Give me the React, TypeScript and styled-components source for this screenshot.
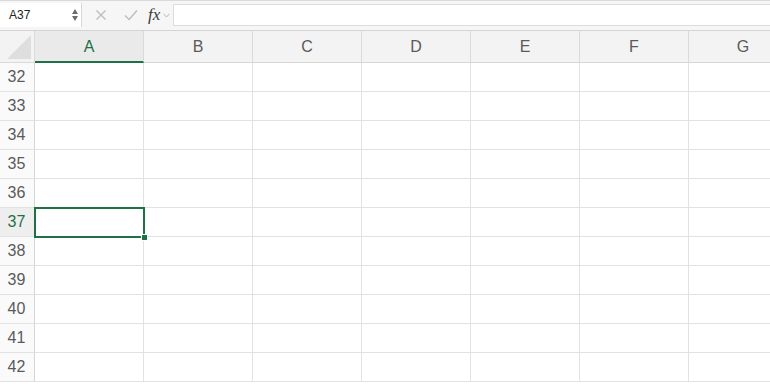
import React, { FC } from 'react';
import styled, { createGlobalStyle } from 'styled-components';

const GREEN = '#1e7145';
const COLUMNS = ['A', 'B', 'C', 'D', 'E', 'F', 'G'];
const ROWS = [32, 33, 34, 35, 36, 37, 38, 39, 40, 41, 42];
const ACTIVE_COL = 'A';
const ACTIVE_ROW = 37;

const GlobalStyle = createGlobalStyle`
  html, body {
    margin: 0;
    padding: 0;
    background: #ffffff;
    overflow: hidden;
  }

  body {
    font-family: 'Liberation Sans', Arial, sans-serif;
  }
`;

const Sheet = styled.div`
  width: 770px;
  height: 387px;
  overflow: hidden;
  display: flex;
  flex-direction: column;
`;

const FormulaBar = styled.div`
  height: 28px;
  display: flex;
  align-items: center;
  background: #f6f6f6;
  border-top: 1px solid #dadada;
  border-bottom: 1px solid #d4d4d4;
  padding-bottom: 1px;
  box-shadow: 0 1px 0 #e4e4e4;
`;

const NameBox = styled.div`
  width: 82px;
  height: 24px;
  box-sizing: border-box;
  background: #ffffff;
  border-right: 1px solid #d6d6d6;
  display: flex;
  align-items: center;
  justify-content: space-between;
  padding: 0 3px 0 9px;
  font-size: 12px;
  color: #222;
`;

const Spinner = styled.div`
  display: flex;
  flex-direction: column;
  align-items: center;
  gap: 2px;

  .up,
  .down {
    width: 0;
    height: 0;
    border-left: 3px solid transparent;
    border-right: 3px solid transparent;
  }

  .up {
    border-bottom: 5px solid #6c6c6c;
  }

  .down {
    border-top: 5px solid #6c6c6c;
  }
`;

const ToolIcons = styled.div`
  display: flex;
  align-items: center;
  padding-left: 13px;
  gap: 17px;
  height: 100%;
`;

const FxLabel = styled.span`
  font-family: 'Liberation Serif', 'Times New Roman', serif;
  font-style: italic;
  font-size: 17px;
  color: #3a3a3a;
  margin-left: -7px;
  display: flex;
  align-items: center;
  gap: 3px;
`;

const FormulaInput = styled.div`
  flex: 1;
  height: 20px;
  margin-left: 3px;
  background: #ffffff;
  border: 1px solid #dcdcdc;
  border-right: none;
`;

const Grid = styled.div`
  display: grid;
  grid-template-columns: 35px repeat(7, 109px);
  grid-template-rows: 32px;
  grid-auto-rows: 29px;
`;

const HeaderRow = styled.div`
  display: contents;
`;

const Corner = styled.div`
  box-sizing: border-box;
  position: relative;
  background: #f3f3f3;
  border-right: 1px solid #dadada;
  border-bottom: 1px solid #dadada;

  &::after {
    content: '';
    position: absolute;
    right: 3px;
    bottom: 3px;
    width: 0;
    height: 0;
    border-left: 24px solid transparent;
    border-bottom: 24px solid #dedede;
  }
`;

const ColHeader = styled.div<{ $active: boolean }>`
  box-sizing: border-box;
  display: flex;
  align-items: center;
  justify-content: center;
  font-size: 16px;
  color: ${(p) => (p.$active ? GREEN : '#5a5a5a')};
  background: ${(p) => (p.$active ? '#eaeaea' : '#f3f3f3')};
  border-right: 1px solid #dadada;
  border-bottom: ${(p) => (p.$active ? `2px solid ${GREEN}` : '1px solid #d6d6d6')};
  padding-top: ${(p) => (p.$active ? '1px' : '0')};
`;

const RowHeader = styled.div<{ $active: boolean }>`
  box-sizing: border-box;
  display: flex;
  align-items: center;
  justify-content: center;
  padding-right: 1px;
  font-size: 16px;
  color: ${(p) => (p.$active ? GREEN : '#5a5a5a')};
  background: ${(p) => (p.$active ? '#eeeeee' : '#fafafa')};
  border-right: 1px solid #d6d6d6;
  border-bottom: 1px solid #e2e2e2;
`;

const Cell = styled.div`
  box-sizing: border-box;
  position: relative;
  border-right: 1px solid #e2e2e2;
  border-bottom: 1px solid #e2e2e2;
`;

const Selection = styled.div`
  position: absolute;
  left: -1px;
  top: -1px;
  right: -2px;
  bottom: -2px;
  border: 2px solid ${GREEN};
  z-index: 2;
`;

const FillHandle = styled.div`
  position: absolute;
  right: -5px;
  bottom: -5px;
  width: 5px;
  height: 5px;
  background: ${GREEN};
  border: 1px solid #ffffff;
  z-index: 3;
`;

const CrossIcon: FC = () => (
  <svg width="12" height="12" viewBox="0 0 12 12">
    <path d="M1.5 1.5 L10.5 10.5 M10.5 1.5 L1.5 10.5" stroke="#bdbdbd" strokeWidth="1.4" fill="none" />
  </svg>
);

const CheckIcon: FC = () => (
  <svg width="14" height="12" viewBox="0 0 14 12">
    <path d="M1 6.5 L5 10.5 L13 1.5" stroke="#bdbdbd" strokeWidth="1.4" fill="none" />
  </svg>
);

const ChevronIcon: FC = () => (
  <svg width="7" height="5" viewBox="0 0 7 5">
    <path d="M0.5 0.8 L3.5 4 L6.5 0.8" stroke="#b5b5b5" strokeWidth="1" fill="none" />
  </svg>
);

const App: FC = () => (
  <Sheet>
    <GlobalStyle />
    <FormulaBar>
      <NameBox>
        <span>A37</span>
        <Spinner>
          <span className="up" />
          <span className="down" />
        </Spinner>
      </NameBox>
      <ToolIcons>
        <CrossIcon />
        <CheckIcon />
        <FxLabel>
          fx
          <ChevronIcon />
        </FxLabel>
      </ToolIcons>
      <FormulaInput />
    </FormulaBar>

    <Grid>
      <HeaderRow>
        <Corner />
        {COLUMNS.map((col) => (
          <ColHeader key={col} $active={col === ACTIVE_COL}>
            {col}
          </ColHeader>
        ))}
      </HeaderRow>
      {ROWS.map((row) => (
        <React.Fragment key={row}>
          <RowHeader $active={row === ACTIVE_ROW}>{row}</RowHeader>
          {COLUMNS.map((col) => (
            <Cell key={col}>
              {row === ACTIVE_ROW && col === ACTIVE_COL && (
                <>
                  <Selection />
                  <FillHandle />
                </>
              )}
            </Cell>
          ))}
        </React.Fragment>
      ))}
    </Grid>
  </Sheet>
);

export default App;
